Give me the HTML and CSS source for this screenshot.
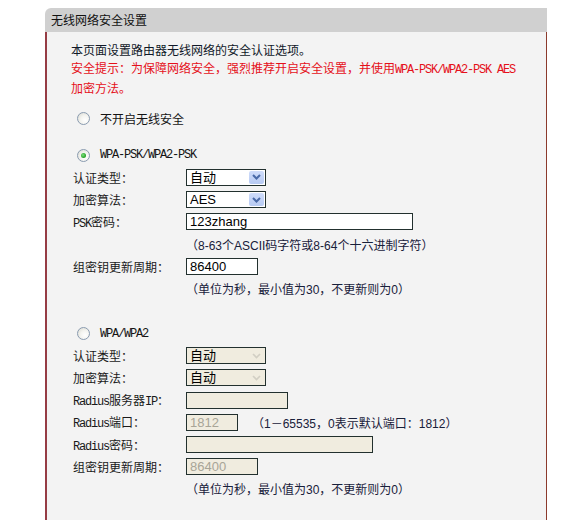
FILE: index.html
```html
<!DOCTYPE html>
<html>
<head>
<meta charset="utf-8">
<link rel="stylesheet" href="styles.css">
</head>
<body>
<div class="panel">
  <div class="head">无线网络安全设置</div>
  <div class="body">
    <p class="intro">本页面设置路由器无线网络的安全认证选项。<br><span class="warn">安全提示：为保障网络安全，强烈推荐开启安全设置，并使用<span class="m">WPA-PSK/WPA2-PSK AES</span><br>加密方法。</span></p>

    <div class="row radio-row first"><span class="radio"></span><span class="rtext">不开启无线安全</span></div>

    <div class="row radio-row second"><span class="radio on"></span><span class="rtext m">WPA-PSK/WPA2-PSK</span></div>
    <div class="row"><span class="lbl">认证类型：</span><span class="sel"><span class="val">自动</span><span class="arrow"><svg width="9" height="6" viewBox="0 0 9 6"><path d="M1 1 L4.5 4.5 L8 1" fill="none" stroke="#4a6aa8" stroke-width="2"/></svg></span></span></div>
    <div class="row"><span class="lbl">加密算法：</span><span class="sel"><span class="val">AES</span><span class="arrow"><svg width="9" height="6" viewBox="0 0 9 6"><path d="M1 1 L4.5 4.5 L8 1" fill="none" stroke="#4a6aa8" stroke-width="2"/></svg></span></span></div>
    <div class="row"><span class="lbl"><span class="m">PSK</span>密码：</span><span class="inp w227">123zhang</span></div>
    <div class="row"><span class="lbl"></span><span class="hint">（8-63个ASCII码字符或8-64个十六进制字符）</span></div>
    <div class="row"><span class="lbl">组密钥更新周期：</span><span class="inp w72">86400</span></div>
    <div class="row"><span class="lbl"></span><span class="hint">（单位为秒，最小值为30，不更新则为0）</span></div>

    <div class="row radio-row third"><span class="radio"></span><span class="rtext m">WPA/WPA2</span></div>
    <div class="row"><span class="lbl">认证类型：</span><span class="sel dis"><span class="val">自动</span><span class="arrow"><svg width="9" height="6" viewBox="0 0 9 6"><path d="M1 1 L4.5 4.5 L8 1" fill="none" stroke="#d2cfc4" stroke-width="1.6"/></svg></span></span></div>
    <div class="row"><span class="lbl">加密算法：</span><span class="sel dis"><span class="val">自动</span><span class="arrow"><svg width="9" height="6" viewBox="0 0 9 6"><path d="M1 1 L4.5 4.5 L8 1" fill="none" stroke="#d2cfc4" stroke-width="1.6"/></svg></span></span></div>
    <div class="row"><span class="lbl"><span class="m">Radius</span>服务器<span class="m">IP</span>：</span><span class="inp dis w102"></span></div>
    <div class="row"><span class="lbl"><span class="m">Radius</span>端口：</span><span class="inp dis w52">1812</span><span class="hint port">（1－65535，0表示默认端口：1812）</span></div>
    <div class="row"><span class="lbl"><span class="m">Radius</span>密码：</span><span class="inp dis w187"></span></div>
    <div class="row"><span class="lbl">组密钥更新周期：</span><span class="inp dis w72">86400</span></div>
    <div class="row"><span class="lbl"></span><span class="hint">（单位为秒，最小值为30，不更新则为0）</span></div>
  </div>
</div>
</body>
</html>
```

FILE: styles.css
```css
html, body {
  margin: 0;
  padding: 0;
  background: #ffffff;
}
body {
  font-family: "Liberation Sans", "Noto Sans CJK SC", sans-serif;
  font-size: 12px;
  color: #141414;
}
.panel {
  margin: 8px 0 0 45px;
  width: 502px;
}
.head {
  height: 24px;
  line-height: 24px;
  background: #d0d0d0;
  border-top-left-radius: 6px;
  padding-left: 6px;
  font-family: "Noto Sans CJK SC", sans-serif;
  font-size: 12px;
  color: #111;
}
.body {
  background: #f3f3f3;
  border-left: 2px solid #963c44;
  border-right: 1px solid #8c3a2c;
  height: 480px;
  padding-top: 9px;
}
.m {
  font-family: "Liberation Mono", monospace;
  font-size: 12px;
  letter-spacing: -1.2px;
}
.intro {
  margin: 0;
  padding-left: 24px;
  line-height: 18px;
  font-family: "Noto Sans CJK SC", sans-serif;
  color: #101828;
}
.warn {
  color: #e5101a;
}
.row {
  display: flex;
  align-items: center;
  height: 22.2px;
  padding-left: 26px;
}
.radio-row.first { margin-top: 10px; }
.radio-row.second { margin-top: 15px; }
.radio-row.third { margin-top: 23px; }
.radio {
  width: 11px;
  height: 11px;
  border: 1px solid #8a9bb0;
  border-radius: 50%;
  background: radial-gradient(circle at 65% 65%, #ffffff 0%, #f4f4f0 45%, #d8d8d0 100%);
  margin-left: 4px;
  margin-right: 10px;
  position: relative;
  flex: none;
}
.radio.on::after {
  content: "";
  position: absolute;
  left: 3px;
  top: 3px;
  width: 5px;
  height: 5px;
  border-radius: 50%;
  background: radial-gradient(circle at 40% 40%, #7ee07e 0%, #2fa82f 60%, #1d8a1d 100%);
}
.rtext {
  font-family: "Noto Sans CJK SC", sans-serif;
}
.rtext.m {
  font-family: "Liberation Mono", monospace;
}
.lbl {
  width: 113px;
  flex: none;
  font-family: "Noto Sans CJK SC", sans-serif;
  color: #1a1a1a;
}
.lbl .m {
  font-family: "Liberation Mono", monospace;
}
.sel {
  width: 78px;
  height: 15px;
  border: 1px solid #22302e;
  background: #ffffff;
  display: flex;
  align-items: center;
  justify-content: space-between;
  box-sizing: content-box;
}
.sel .val {
  padding-left: 3px;
  font-family: "Liberation Sans", "Noto Sans CJK SC", sans-serif;
  font-size: 13px;
  line-height: 15px;
  color: #000;
}
.sel .arrow {
  width: 15px;
  height: 13px;
  margin-right: 1px;
  background: linear-gradient(#cfdcfa, #b7caf3);
  border-radius: 2px;
  display: flex;
  align-items: center;
  justify-content: center;
}
.sel.dis {
  background: #f0ecdf;
}
.sel.dis .arrow {
  background: #f0ecdf;
}
.inp {
  border: 1px solid #22302e;
  background: #ffffff;
  box-sizing: border-box;
  height: 17px;
  padding-left: 3px;
  font-family: "Liberation Sans", sans-serif;
  font-size: 13px;
  line-height: 15px;
  color: #000;
  flex: none;
}
.inp.dis {
  background: #f0ecdf;
  color: #a8a597;
}
.w227 { width: 227px; }
.w72 { width: 72px; }
.w102 { width: 102px; }
.w52 { width: 52px; }
.w187 { width: 187px; }
.hint {
  font-family: "Liberation Sans", "Noto Sans CJK SC", sans-serif;
  color: #18203a;
}
.hint.port {
  margin-left: 14px;
}
```
